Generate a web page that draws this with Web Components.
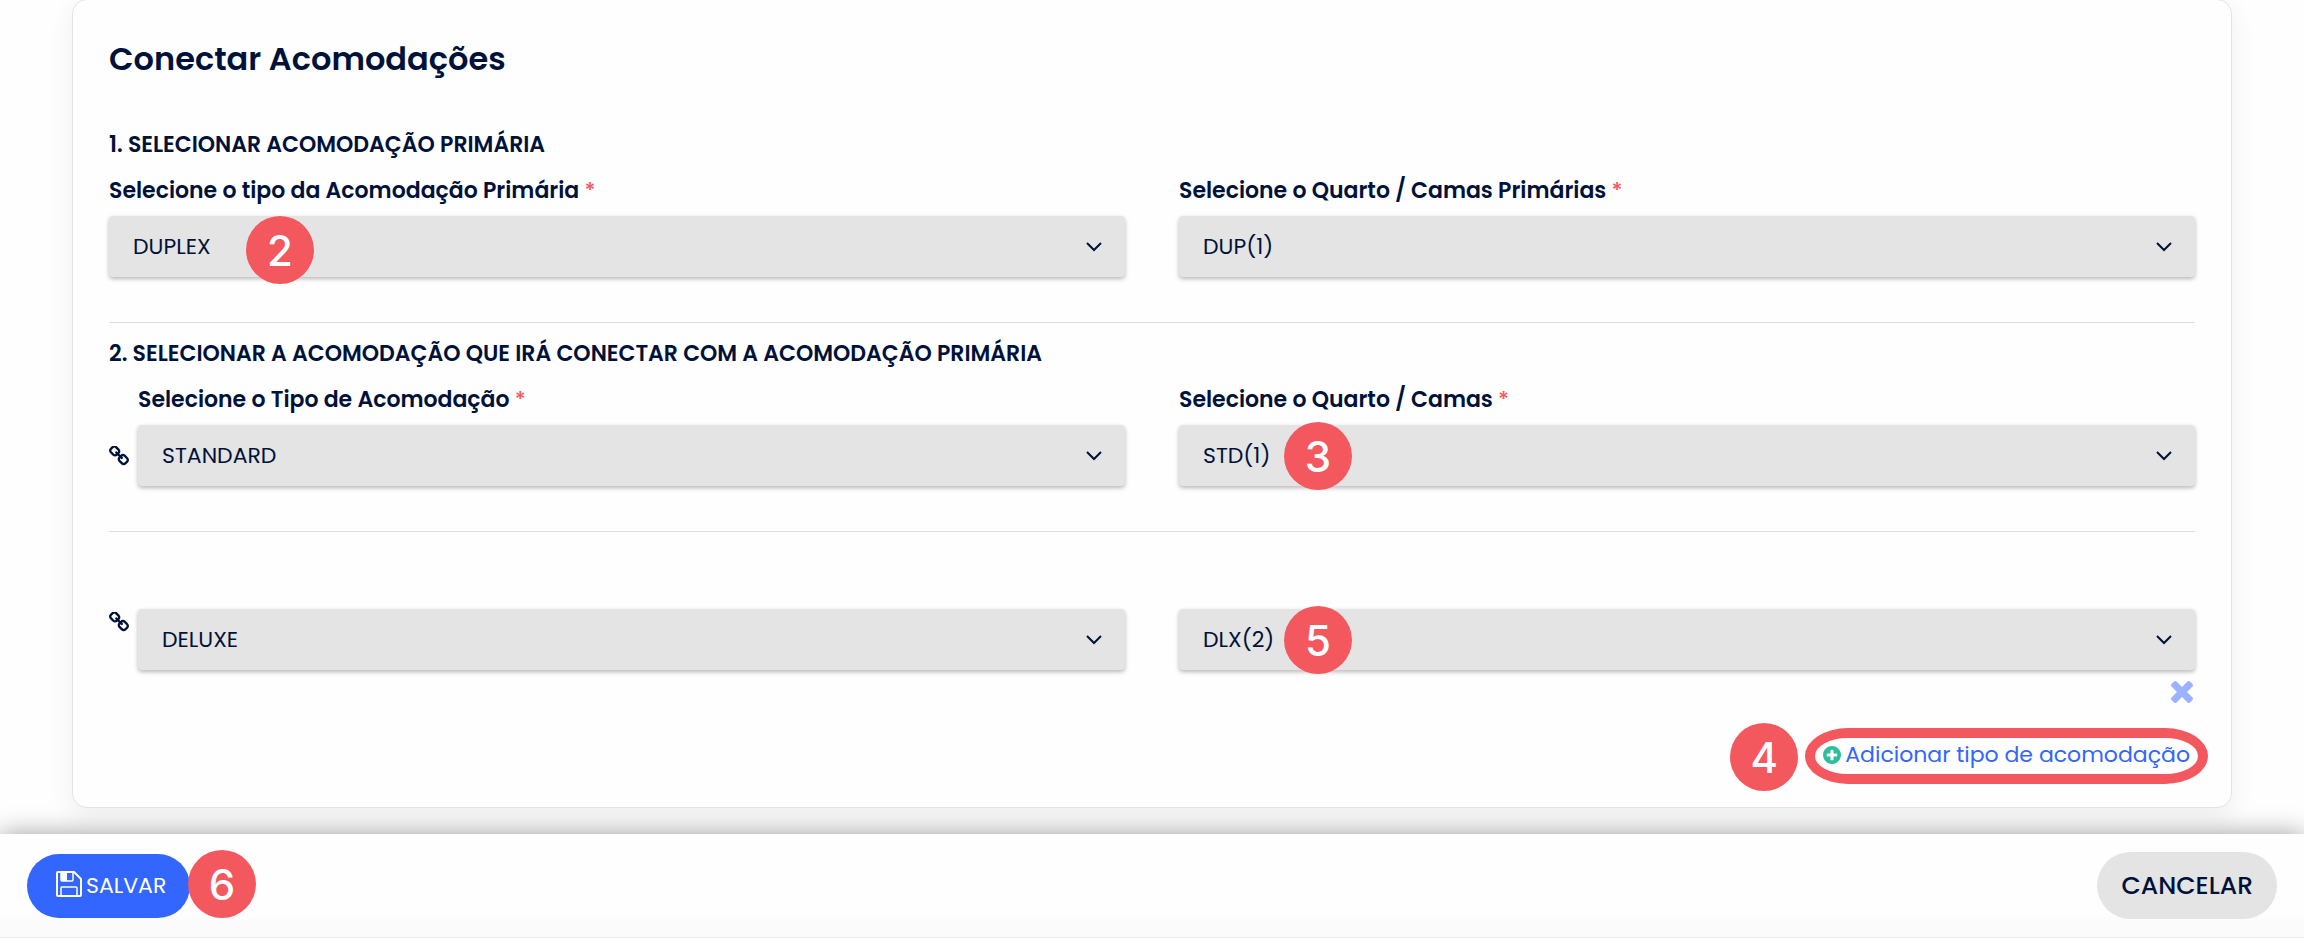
<!DOCTYPE html>
<html lang="pt-BR">
<head>
<meta charset="utf-8">
<meta name="viewport" content="width=device-width, initial-scale=1">
<title>Conectar Acomodações</title>
<style>
  html, body { margin: 0; }
  body {
    --ink: #001239;
    --blue: #3366ff;
    --coral: #f4585f;
    --field: #e4e4e4;
    --line: #dcdddf;
    font-family: Poppins, Inter, sans-serif;
    color: var(--ink);
    background: #fefefe;
  }
</style>
</head>
<body>
<connect-page></connect-page>

<script>
const define = (name, html, setup) => {
  const template = document.createElement('template');
  template.innerHTML = html;
  customElements.define(name, class extends HTMLElement {
    constructor() {
      super();
      this.attachShadow({ mode: 'open' }).append(template.content.cloneNode(true));
    }
    connectedCallback() { if (setup) setup(this, this.shadowRoot); }
  });
};

/* Numbered tutorial marker */
define('step-badge', `
  <style>
    :host {
      display: flex; align-items: center; justify-content: center;
      box-sizing: border-box; width: 68px; height: 68px; padding-top: 2px; border-radius: 50%;
      background: var(--coral); color: #fff;
      font: 500 42px/66px Inter, sans-serif;
    }
  </style>
  <slot></slot>`);

/* Chain glyph that marks a connected room */
define('link-icon', `
  <style>
    :host { display: block; width: 20px; height: 20px; }
    svg { display: block; width: 100%; height: 100%; fill: currentColor; }
  </style>
  <svg viewBox="80 80 1632 1632" aria-hidden="true"><path d="M1520 1216q0-40-28-68l-208-208q-28-28-68-28-42 0-72 32 3 3 19 18.500t21.500 21.500 15 19 13 25.500 3.500 27.500q0 40-28 68t-68 28q-15 0-27.500-3.500t-25.500-13-19-15-21.500-21.500-18.500-19q-33 31-33 73 0 40 28 68l206 207q27 27 68 27 40 0 68-26l147-146q28-28 28-67zm-703-705q0-40-28-68l-206-207q-28-28-68-28-39 0-68 27l-147 146q-28 28-28 67 0 40 28 68l208 208q27 27 68 27 42 0 72-31-3-3-19-18.500t-21.500-21.500-15-19-13-25.500-3.500-27.500q0-40 28-68t68-28q15 0 27.500 3.500t25.500 13 19 15 21.500 21.500 18.500 19q33-31 33-73zm895 705q0 120-85 203l-147 146q-83 83-203 83-121 0-204-85l-206-207q-83-83-83-203 0-123 88-209l-88-88q-86 88-208 88-120 0-204-84l-208-208q-84-84-84-204t85-203l147-146q83-83 203-83 121 0 204 85l206 207q83 83 83 203 0 123-88 209l88 88q86-88 208-88 120 0 204 84l208 208q84 84 84 204z"/></svg>`);

/* Labelled drop-down; "icon" slot sits before the box, "badge" slot lies over it */
define('select-field', `
  <style>
    :host { display: grid; grid-template-columns: auto 1fr; row-gap: 10px; min-width: 0; }
    label { grid-column: 2; font-size: 22px; line-height: 30px; font-weight: 600; }
    label[hidden] { display: none; }
    label i { font-style: normal; font-weight: 500; color: var(--coral); }
    .icon { grid-column: 1; display: flex; align-items: center; }
    :host([icon-top]) .icon { align-items: flex-start; padding-top: 3px; }
    ::slotted(link-icon) { margin-right: 9px; }
    .box { grid-column: 2; position: relative; }
    select {
      appearance: none; display: block; width: 100%; height: 61px; margin: 0;
      padding: 0 60px 0 24px; border: 0; border-radius: 4px;
      background: var(--field); color: inherit;
      box-shadow: 0 2px 4px rgba(0, 0, 0, .28);
      font: 400 22px/30px Poppins, Inter, sans-serif;
    }
    .chevron {
      position: absolute; right: 23px; top: 50%; margin-top: -5px;
      width: 16px; height: 10px; pointer-events: none;
      fill: none; stroke: currentColor; stroke-width: 2;
    }
    ::slotted(step-badge) { position: absolute; top: var(--badge-top, 0); left: var(--badge-left, 0); }
  </style>
  <label for="s"><span></span> <i>*</i></label>
  <div class="icon"><slot name="icon"></slot></div>
  <div class="box">
    <select id="s"><option></option></select>
    <svg class="chevron" viewBox="0 0 16 10" aria-hidden="true"><path d="M1 1l7 7 7-7"/></svg>
    <slot name="badge"></slot>
  </div>`, (host, root) => {
  const label = host.getAttribute('label');
  root.querySelector('label').hidden = !label;
  root.querySelector('label span').textContent = label || '';
  if (!label) root.querySelector('select').setAttribute('aria-label', host.getAttribute('name'));
  root.querySelector('option').textContent = host.getAttribute('value');
});

/* Two equal columns of fields */
define('field-row', `
  <style>
    :host { display: grid; grid-template-columns: 1fr 1fr; column-gap: 54px; }
  </style>
  <slot></slot>`);

define('add-link', `
  <style>
    :host { display: flex; justify-content: flex-end; }
    .wrap { position: relative; margin-right: 5px; }
    a {
      display: flex; align-items: center; gap: 4px;
      color: var(--blue); text-decoration: none; font-size: 22px; line-height: 30px;
    }
    svg { width: 18px; height: 18px; fill: #2dbf9b; }
    .ring {
      position: absolute; inset: -12px -18px -14px; pointer-events: none;
      border: 10px solid var(--coral); border-radius: 43px / 28px;
    }
    ::slotted(step-badge) { position: absolute; left: -93px; top: -17px; }
  </style>
  <div class="wrap">
    <a href="#"><svg viewBox="128 128 1536 1536" aria-hidden="true"><path d="M1344 960v-128q0-26-19-45t-45-19h-256v-256q0-26-19-45t-45-19h-128q-26 0-45 19t-19 45v256h-256q-26 0-45 19t-19 45v128q0 26 19 45t45 19h256v256q0 26 19 45t45 19h128q26 0 45-19t19-45v-256h256q26 0 45-19t19-45zm320-64q0 209-103 385.500t-279.500 279.500-385.500 103-385.500-103-279.500-279.500-103-385.500 103-385.500 279.500-279.500 385.500-103 385.500 103 279.500 279.500 103 385.500z"/></svg><span>Adicionar tipo de acomodação</span></a>
    <div class="ring"></div>
    <slot></slot>
  </div>`);

define('connect-card', `
  <style>
    :host {
      display: block; margin: -1px 72px 26px; padding: 41px 36px 37px;
      border: 1px solid #e2e3e5; border-radius: 15px; background: #fefefe;
      box-shadow: 0 8px 24px rgba(50, 60, 100, .08);
    }
    h1 { margin: 0 0 53px; font-size: 32px; line-height: 36px; font-weight: 600; }
    h2 { margin: 0 0 16px; font-size: 22px; line-height: 30px; font-weight: 600; }
    hr { margin: 45px 0 16px; border: 0; height: 1px; background: var(--line); }
    hr.wide { margin-bottom: 77px; }
    .remove { display: flex; justify-content: flex-end; padding: 11px 2px 37px; }
    button { display: block; padding: 0; border: 0; background: none; width: 22px; height: 22px; }
    button svg { display: block; fill: #9bb3ff; }
  </style>
  <h1>Conectar Acomodações</h1>
  <h2>1. SELECIONAR ACOMODAÇÃO PRIMÁRIA</h2>
  <field-row>
    <select-field label="Selecione o tipo da Acomodação Primária" value="DUPLEX" style="--badge-left: 137px">
      <step-badge slot="badge">2</step-badge>
    </select-field>
    <select-field label="Selecione o Quarto / Camas Primárias" value="DUP(1)"></select-field>
  </field-row>
  <hr>
  <h2>2. SELECIONAR A ACOMODAÇÃO QUE IRÁ CONECTAR COM A ACOMODAÇÃO PRIMÁRIA</h2>
  <field-row>
    <select-field label="Selecione o Tipo de Acomodação" value="STANDARD">
      <link-icon slot="icon"></link-icon>
    </select-field>
    <select-field label="Selecione o Quarto / Camas" value="STD(1)" style="--badge-left: 105px; --badge-top: -3px">
      <step-badge slot="badge">3</step-badge>
    </select-field>
  </field-row>
  <hr class="wide">
  <field-row>
    <select-field name="Tipo de Acomodação" value="DELUXE" icon-top>
      <link-icon slot="icon"></link-icon>
    </select-field>
    <select-field name="Quarto / Camas" value="DLX(2)" style="--badge-left: 105px; --badge-top: -3px">
      <step-badge slot="badge">5</step-badge>
    </select-field>
  </field-row>
  <div class="remove">
    <button type="button" aria-label="Remover"><svg width="22" height="22" viewBox="302 366 1188 1188"><path d="M1490 1322q0 40-28 68l-136 136q-28 28-68 28t-68-28l-294-294-294 294q-28 28-68 28t-68-28l-136-136q-28-28-28-68t28-68l294-294-294-294q-28-28-28-68t28-68l136-136q28-28 68-28t68 28l294 294 294-294q28-28 68-28t68 28l136 136q28 28 28 68t-28 68l-294 294 294 294q28 28 28 68z"/></svg></button>
  </div>
  <add-link><step-badge>4</step-badge></add-link>`);

define('action-bar', `
  <style>
    :host {
      display: flex; align-items: center; justify-content: space-between;
      box-sizing: border-box; height: 104px; padding: 0 27px;
      position: relative; border-bottom: 1px solid #ececec;
      background: linear-gradient(#fefefe 70%, #fafafa);
      box-shadow: 0 0 24px rgba(0, 0, 0, .38);
    }
    .save { position: relative; }
    button { display: flex; align-items: center; border: 0; margin: 0; font-family: inherit; font-weight: 500; }
    .primary {
      height: 64px; padding: 0 24px 0 29px; gap: 4px; border-radius: 32px;
      background: var(--blue); color: #fff; font-size: 22px; line-height: 30px; font-weight: 400;
    }
    .primary svg { margin-bottom: 4px; }
    .cancel {
      height: 67px; padding: 0 24px; border-radius: 34px;
      background: var(--field); color: var(--ink); font-size: 25px; line-height: 30px;
    }
    step-badge { position: absolute; left: 161px; top: -4px; }
  </style>
  <div class="save">
    <button type="button" class="primary">
      <svg width="26" height="26" viewBox="0 0 26 26" fill="none" stroke="currentColor" stroke-width="2" aria-hidden="true">
        <path d="M2 1h16l7 7v16a1 1 0 0 1-1 1H2a1 1 0 0 1-1-1V2a1 1 0 0 1 1-1z"/>
        <path d="M5 1v8a1 1 0 0 0 1 1h10a1 1 0 0 0 1-1V1M5 25v-8a1 1 0 0 1 1-1h14a1 1 0 0 1 1 1v8" stroke-width="1.500"/>
        <path d="M5 2h6v8H5z" fill="currentColor" stroke="none"/>
      </svg>
      <span>SALVAR</span>
    </button>
    <step-badge>6</step-badge>
  </div>
  <button type="button" class="cancel">CANCELAR</button>`);

define('connect-page', `
  <style>
    :host { display: flex; flex-direction: column; min-height: 100vh; overflow: hidden; }
    action-bar { margin-top: auto; }
  </style>
  <connect-card></connect-card>
  <action-bar></action-bar>`);
</script>
</body>
</html>
